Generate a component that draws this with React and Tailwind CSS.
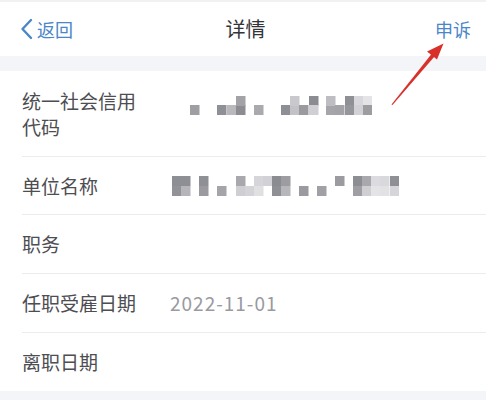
import React from 'react';

const font = { fontFamily: '"Noto Sans CJK SC", "Noto Sans", sans-serif' };

// mosaic blocks: [x, y, shade]
const codeBlocks = [
  [190, 106, '#9e9ea3'], [217, 106, '#8f9095'], [227, 106, '#b8b8bd'], [236, 106, '#8c8d92'],
  [236, 97, '#a2a2a7'], [254, 106, '#a9a9ae'], [281, 106, '#8e8f94'], [290, 106, '#c2c2c7'],
  [290, 97, '#c8c8cd'], [299, 106, '#9a9a9f'], [309, 97, '#8b8c91'], [309, 106, '#d0d0d4'],
  [326, 106, '#a5a5aa'], [326, 97, '#bdbdc2'], [335, 106, '#a3a3a8'], [345, 97, '#8f9095'],
  [345, 106, '#95969b'], [354, 97, '#d8d8dc'], [354, 106, '#d2d2d6'], [363, 97, '#e4e4e7'],
  [363, 106, '#9c9ca1'],
];

const nameBlocks = [
  [172, 178, '#8e8f94'], [172, 188, '#929398'], [181, 178, '#8e8f94'], [181, 188, '#b5b5ba'],
  [199, 178, '#8f9095'], [199, 188, '#9a9a9f'], [217, 188, '#a4a4a9'],
  [236, 178, '#a8a8ad'], [236, 188, '#cfcfd3'], [245, 188, '#d4d4d8'], [254, 178, '#d6d6da'],
  [254, 188, '#e0e0e3'], [263, 178, '#d2d2d6'],
  [272, 178, '#8b8c91'], [272, 188, '#8f9095'], [281, 178, '#9c9ca1'], [281, 188, '#b6b6bb'],
  [299, 188, '#9a9aa0'], [317, 188, '#a0a0a5'], [335, 178, '#9b9ba0'],
  [353, 178, '#8d8e93'], [353, 188, '#9e9ea3'], [362, 178, '#a8a8ad'], [362, 188, '#cfcfd3'],
  [371, 178, '#dcdce0'], [371, 188, '#e4e4e7'], [380, 178, '#d9d9dd'], [380, 188, '#e2e2e5'],
  [390, 178, '#8f9095'], [390, 188, '#d6d6da'],
];

function Mosaic({ blocks, top }) {
  const xs = blocks.map(b => b[0]);
  const ys = blocks.map(b => b[1]);
  const minX = Math.min(...xs);
  const minY = Math.min(...ys);
  const w = Math.max(...xs) - minX + 9;
  const h = Math.max(...ys) - minY + 10;
  return (
    <svg width={w} height={h} className="block" style={{ marginLeft: minX - 170, marginTop: top }}>
      {blocks.map(([x, y, c], i) => (
        <rect key={i} x={x - minX} y={y - minY} width="9.5" height="10" fill={c} />
      ))}
    </svg>
  );
}

function Row({ label, children, h, last }) {
  return (
    <div className="pl-[22px]">
      <div className={`flex ${h} ${last ? '' : 'border-b border-[#ececef]'}`}>
        <div className="w-[148px] shrink-0 text-[19px] leading-[26px] text-[#4d4d52]">{label}</div>
        <div className="flex-1 text-[19px] leading-[26px] tracking-[1px] text-[#9a9a9f]">{children}</div>
      </div>
    </div>
  );
}

export default function App() {
  return (
    <div className="relative w-[486px] h-[400px] overflow-hidden bg-[#f4f5f8]" style={font}>
      <div className="h-[2px] bg-[#f1f1f3]" />
      <div className="h-[54px] bg-white flex items-center justify-between pl-[20px] pr-[15px]">
        <div className="flex items-center text-[#4a86c8] w-[100px]">
          <svg width="13" height="22" viewBox="0 0 13 22" className="mr-[4px]">
            <path d="M11 2 L2.5 11 L11 20" fill="none" stroke="#4a86c8" strokeWidth="2.4" strokeLinecap="round" strokeLinejoin="round" />
          </svg>
          <span className="text-[18px] leading-none">返回</span>
        </div>
        <div className="text-[20px] text-[#333338] leading-none">详情</div>
        <div className="w-[100px] text-right text-[18px] leading-none text-[#4a86c8]">申诉</div>
      </div>
      <div className="h-[15px]" />
      <div className="bg-white">
        <Row label={<>统一社会信用<br />代码</>} h="h-[86px] py-[17px]">
          <Mosaic blocks={codeBlocks} top={8} />
        </Row>
        <Row label="单位名称" h="h-[58px] items-center">
          <Mosaic blocks={nameBlocks} top={0} />
        </Row>
        <Row label="职务" h="h-[59px] items-center" />
        <Row label="任职受雇日期" h="h-[59px] items-center">2022-11-01</Row>
        <Row label="离职日期" h="h-[58px] items-center" last />
      </div>
      <svg className="absolute left-0 top-0 pointer-events-none" width="486" height="400">
        <polygon points="391.5,104.5 431.5,54 434.5,56.5 392.5,105" fill="#d8312b" />
        <polygon points="443.5,43.5 427,51.5 437,59.5" fill="#d8312b" />
      </svg>
    </div>
  );
}
